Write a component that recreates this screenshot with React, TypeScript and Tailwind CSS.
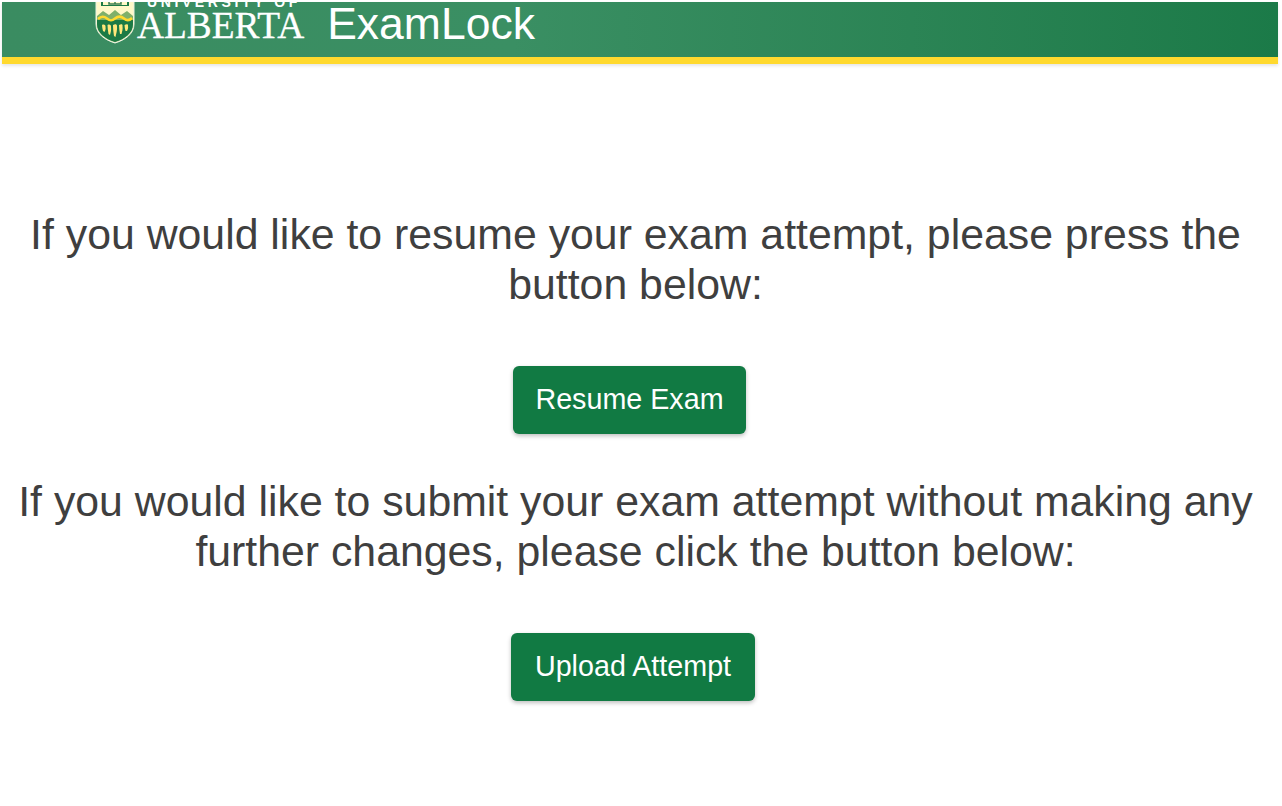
import React from "react";

const Crest: React.FC = () => (
  <svg width="40" height="46" viewBox="0 0 40 46" className="shrink-0">
    <path d="M1 0H39V26C39 36 30 42 20 45C10 42 1 36 1 26Z" fill="#fff8c8" stroke="#e8efe0" strokeWidth="1" />
    <path d="M2 18L8 13L14 17L20 12L26 17L32 13L38 18V26C38 35 30 41 20 44C10 41 2 35 2 26Z" fill="#7fb069" />
    <path d="M2 22H38V26C38 35 30 41 20 44C10 41 2 35 2 26Z" fill="#1c7a45" />
    <path d="M3 21C6 18 9 18 12 20.500C15 23 17 23 20 20.500C23 18 26 18 29 20.500C32 23 35 22 37 20" fill="none" stroke="#ffd92e" strokeWidth="2.500" />
    <path d="M6 1H34V8H6Z" fill="#1c7a45" />
    <path d="M8 1H32V7H8Z" fill="#fff8c8" />
    <path d="M14 0V6H26V0M20 0V6" fill="none" stroke="#3b7d50" strokeWidth="1.500" />
    <g fill="#ffe77a">
      <path d="M7 27C9 26 11 27 10.500 29C11 31 10 33 9.500 34L8 33C7.500 31 7 29 7 27Z" />
      <path d="M12.500 27C14.500 26 16.500 27 16 29C16.500 32 15.500 35 15 37L13.500 36C13 33 12.500 30 12.500 27Z" />
      <path d="M18 27C20 26 22 26 22 28C22.500 32 21 36 20.500 39L19 38C18.500 34 18 31 18 27Z" />
      <path d="M24 27C26 26 28 26 27.500 28C28 31 27 34 26.500 36L25 36C24.500 33 24 30 24 27Z" />
      <path d="M29.500 27C31.500 26 33.500 26 33 28C33.500 30 32.500 32 32 33L30.500 33C30 31 29.500 29 29.500 27Z" />
    </g>
  </svg>
);

const ActionButton: React.FC<{ label: string; size: string }> = ({ label, size }) => (
  <button className={`h-[68px] rounded-md bg-[#117a43] pb-[2px] text-[28.700px] text-white shadow-[0_2px_4px_rgba(0,0,0,0.25)] ${size}`}>
    {label}
  </button>
);

const App: React.FC = () => {
  return (
    <div className="min-h-[806px] bg-white font-['Liberation_Sans',Arial,sans-serif] text-[#3f3f3f]">
      <header className="ml-[2px] mr-[4px] mt-[2px] flex h-[62px] items-start overflow-hidden border-b-[7px] border-[#ffd92e] bg-gradient-to-r from-[#3a8c61] via-[#3a8f63] via-40% to-[#1b7a48] pl-[93px] shadow-[0_2px_3px_rgba(0,0,0,0.1)]">
        <div className="-mt-[4px]">
          <Crest />
        </div>
        <div className="-mt-[7px] ml-[2px] flex flex-col font-['Liberation_Serif',serif] text-white">
          <span className="ml-[10px] whitespace-nowrap font-['Liberation_Sans',sans-serif] text-[14px] font-bold leading-[15px] tracking-[3.600px]">UNIVERSITY OF</span>
          <span className="-mt-[3px] text-[37.400px] font-medium leading-[37px] [-webkit-text-stroke:0.3px_white]">ALBERTA</span>
        </div>
        <span className="-mt-[6px] ml-[23px] text-[44.500px] leading-[56px] text-white">ExamLock</span>
      </header>

      <main className="flex w-[1271px] flex-col items-center pt-[145px] text-center text-[42.800px] leading-[50px]">
        <p className="px-[20px]">If you would like to resume your exam attempt, please press the button below:</p>
        <div className="mr-[12px] mt-[57px]">
          <ActionButton label="Resume Exam" size="w-[233px]" />
        </div>
        <p className="mt-[42px] px-[10px]">If you would like to submit your exam attempt without making any further changes, please click the button below:</p>
        <div className="mr-[5px] mt-[57px]">
          <ActionButton label="Upload Attempt" size="w-[244px]" />
        </div>
      </main>
    </div>
  );
};

export default App;
